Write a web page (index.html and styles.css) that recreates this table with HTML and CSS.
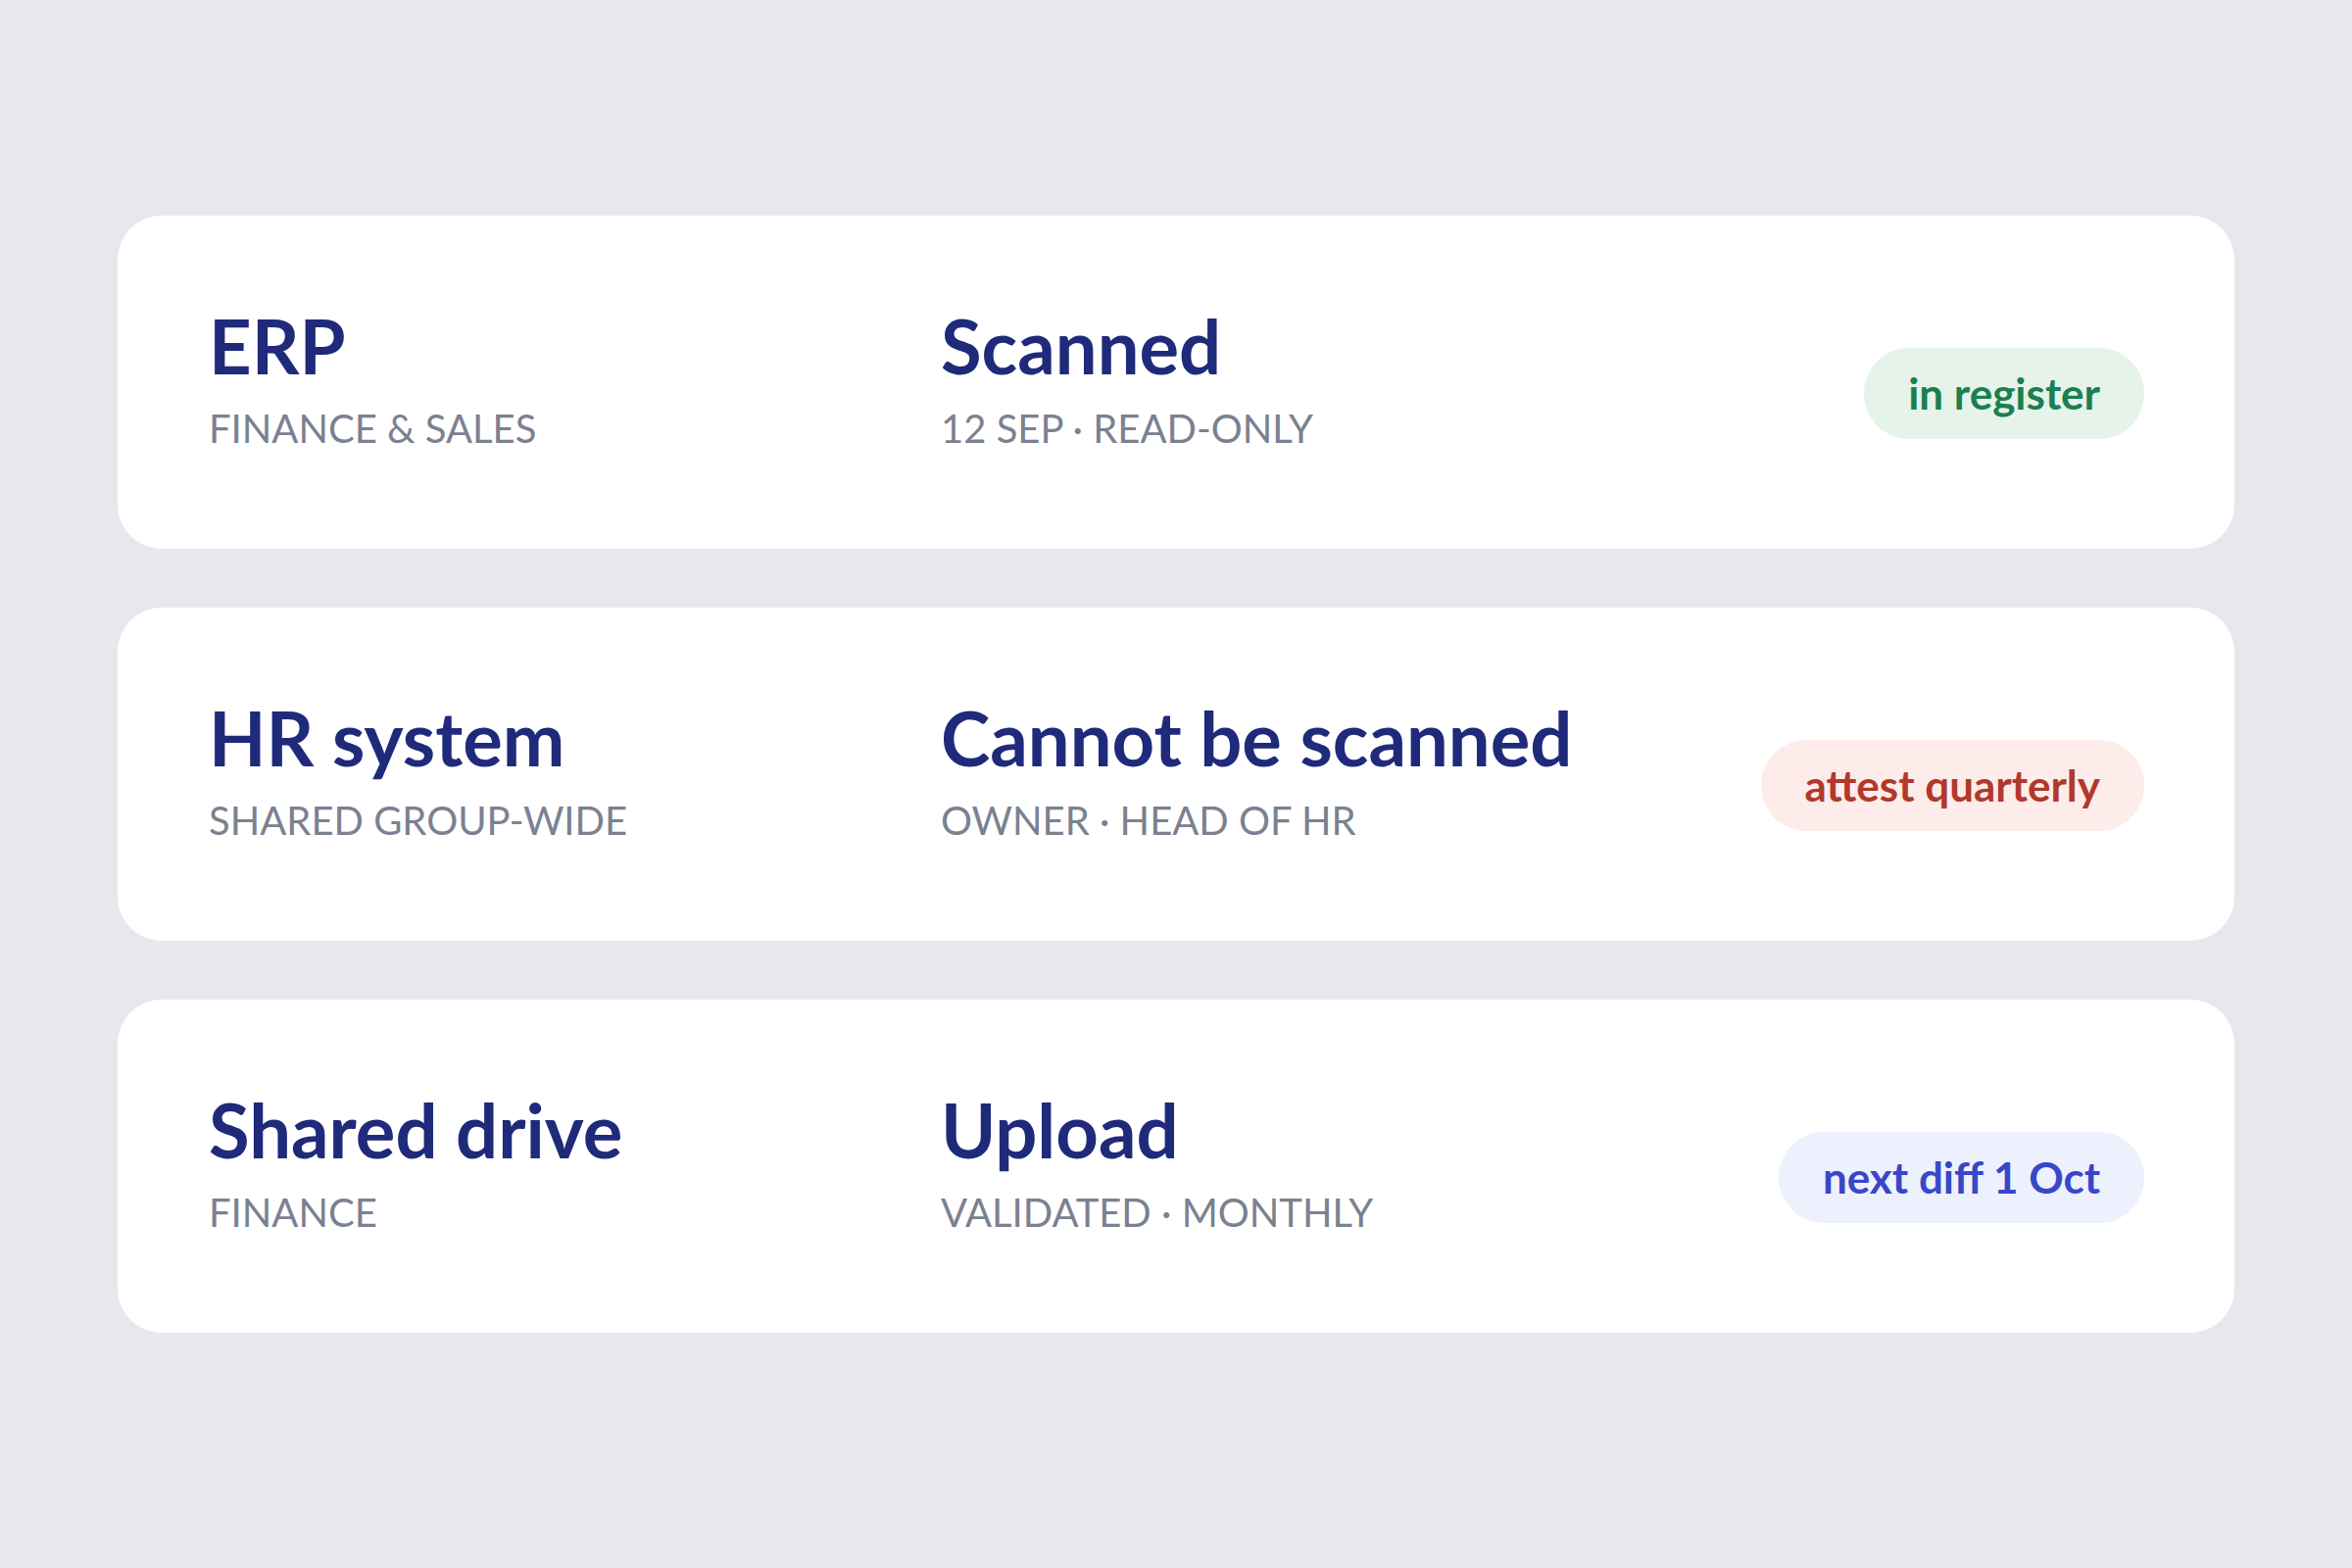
FILE: index.html
```html
<!DOCTYPE html>
<html lang="en">
<head>
<meta charset="utf-8">
<title>Systems</title>
<link rel="stylesheet" href="styles.css">
</head>
<body>
<main class="list">
  <section class="card">
    <div class="col col-name">
      <div class="title">ERP</div>
      <div class="sub">Finance &amp; Sales</div>
    </div>
    <div class="col col-status">
      <div class="title">Scanned</div>
      <div class="sub">12 Sep · Read-only</div>
    </div>
    <span class="badge badge-green">in register</span>
  </section>
  <section class="card">
    <div class="col col-name">
      <div class="title">HR system</div>
      <div class="sub">Shared group-wide</div>
    </div>
    <div class="col col-status">
      <div class="title">Cannot be scanned</div>
      <div class="sub">Owner · Head of HR</div>
    </div>
    <span class="badge badge-red">attest quarterly</span>
  </section>
  <section class="card">
    <div class="col col-name">
      <div class="title">Shared drive</div>
      <div class="sub">Finance</div>
    </div>
    <div class="col col-status">
      <div class="title">Upload</div>
      <div class="sub">Validated · Monthly</div>
    </div>
    <span class="badge badge-blue">next diff 1 Oct</span>
  </section>
</main>
</body>
</html>
```

FILE: styles.css
```css
* { box-sizing: border-box; }
html, body { margin: 0; }
body {
  background: #e7e8ed;
  font-family: Lato, "Open Sans", "Liberation Sans", sans-serif;
  width: 2400px;
  height: 1600px;
}
.list {
  padding: 220px 120px 0;
  display: flex;
  flex-direction: column;
  gap: 60px;
}
.card {
  background: #ffffff;
  border-radius: 45px;
  height: 340px;
  padding: 91px 92px 0 93px;
  display: grid;
  grid-template-columns: 747px 1fr auto;
  align-items: start;
}
.title {
  font-size: 76px;
  font-weight: 700;
  line-height: 1.1;
  color: #1f2a7a;
}
.sub {
  margin-top: 12px;
  font-size: 40px;
  line-height: 1.5;
  color: #7b8190;
  text-transform: uppercase;
}
.badge {
  margin-top: 44px;
  height: 93px;
  padding: 0 45px 2px;
  border-radius: 47px;
  display: inline-flex;
  align-items: center;
  font-size: 44px;
  font-weight: 700;
  white-space: nowrap;
}
.badge-green { background: #e5f3ea; color: #1b7f4f; }
.badge-red { background: #fdecea; color: #b0392b; }
.badge-blue { background: #edf0fd; color: #3847c8; }
```
